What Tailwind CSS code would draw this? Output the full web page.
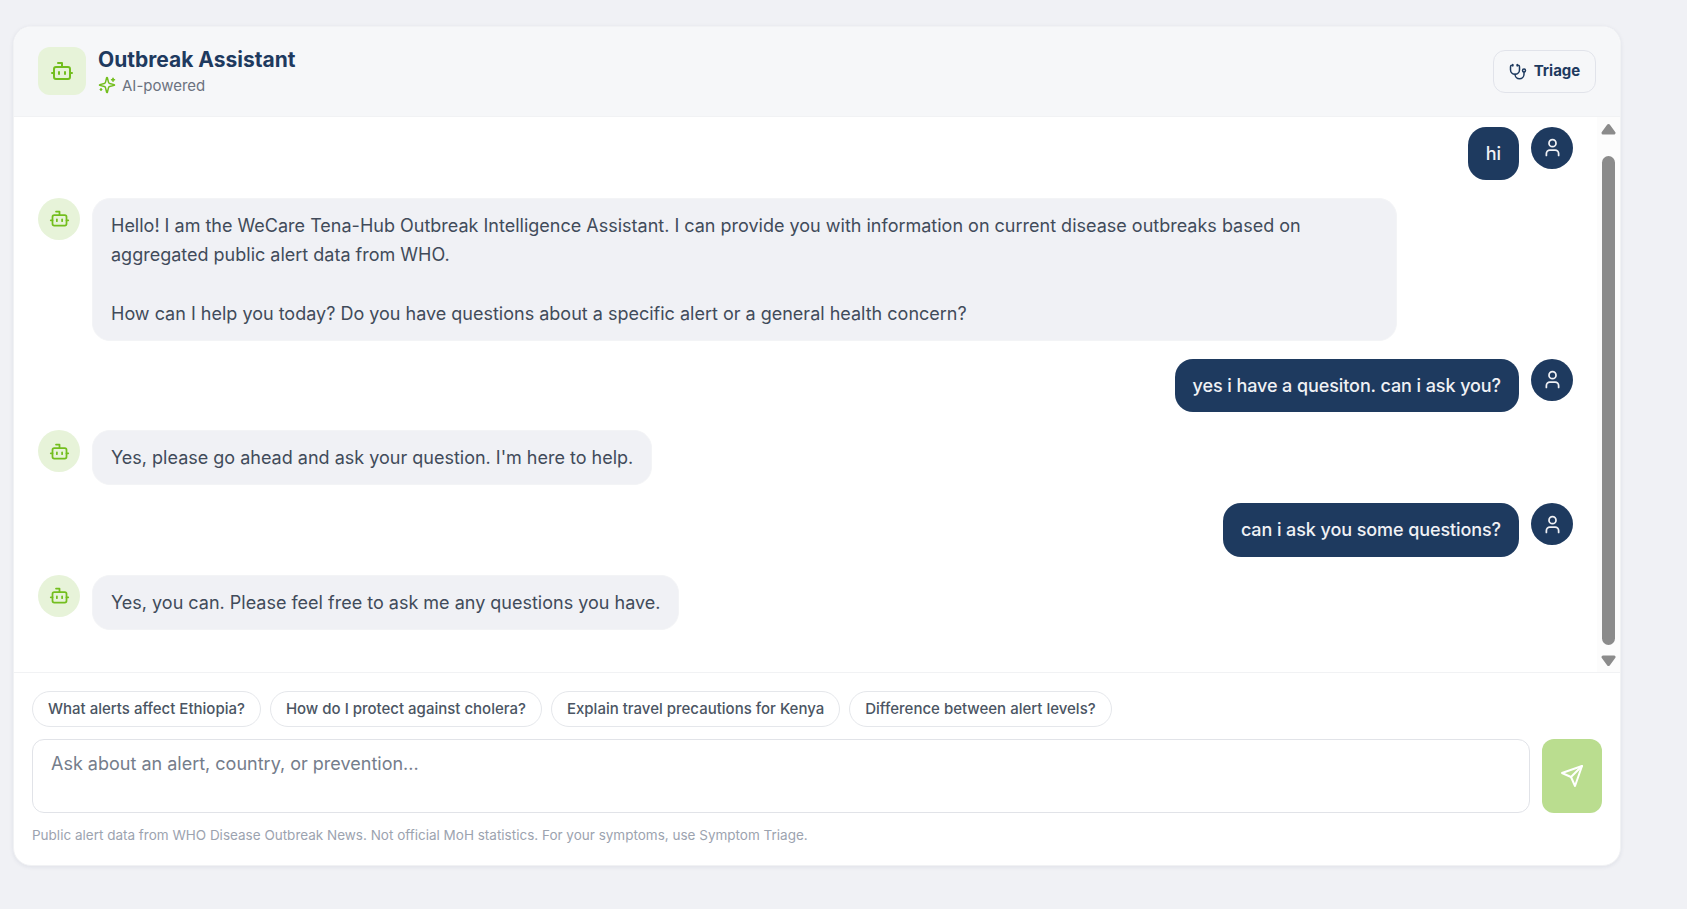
<!doctype html>
<html lang="en">

<head>
    <meta charset="UTF-8" />
    <meta name="viewport" content="width=device-width, initial-scale=1.0" />
    <title>Outbreak Assistant</title>
    <script src="https://cdn.jsdelivr.net/npm/@tailwindcss/browser@4"></script>
</head>

<body class="h-screen overflow-hidden bg-[#f0f1f5] pt-[26px] pl-[13px] font-['Inter',sans-serif] text-[18px] text-[#414b5a]">

    <!-- shared icons -->
    <svg class="hidden">
        <symbol id="bot" viewBox="0 0 24 24">
            <path d="M12 8V4H8" />
            <rect width="16" height="12" x="4" y="8" rx="2" />
            <path d="M2 14h2" />
            <path d="M20 14h2" />
            <path d="M15 13v2" />
            <path d="M9 13v2" />
        </symbol>
        <symbol id="user" viewBox="0 0 24 24">
            <path d="M19 21v-2a4 4 0 0 0-4-4H9a4 4 0 0 0-4 4v2" />
            <circle cx="12" cy="7" r="4" />
        </symbol>
    </svg>

    <div class="flex h-[840px] w-[1608px] flex-col overflow-hidden rounded-[18px] border border-[#f1f2f4] bg-white shadow-[0_1px_4px_rgba(30,40,80,0.08)]">

        <header class="flex h-[90px] shrink-0 items-center justify-between border-b border-[#f1f2f4] bg-[#f6f7f9] px-6">
            <div class="flex items-center gap-3 pb-0.5">
                <div class="flex size-12 items-center justify-center rounded-xl bg-[#e7f3d9] text-[#73be1e]">
                    <svg class="size-6 fill-none stroke-current stroke-2 [stroke-linecap:round] [stroke-linejoin:round]"><use href="#bot" /></svg>
                </div>
                <div class="pt-[3px]">
                    <h1 class="text-[21px] leading-[26px] font-bold text-[#1e3a5f]">Outbreak Assistant</h1>
                    <p class="flex items-center gap-1.5 text-[15px] leading-[25px] text-[#6b7280]">
                        <svg class="size-[18px] fill-none stroke-[#73be1e] stroke-2 [stroke-linecap:round] [stroke-linejoin:round]" viewBox="0 0 24 24">
                            <path d="M9.937 15.5A2 2 0 0 0 8.5 14.063l-6.135-1.582a.5.5 0 0 1 0-.962L8.5 9.936A2 2 0 0 0 9.937 8.5l1.582-6.135a.5.5 0 0 1 .963 0L14.063 8.5A2 2 0 0 0 15.5 9.937l6.135 1.581a.5.5 0 0 1 0 .964L15.5 14.063a2 2 0 0 0-1.437 1.437l-1.582 6.135a.5.5 0 0 1-.963 0z" />
                            <path d="M20 3v4" />
                            <path d="M22 5h-4" />
                            <path d="M4 17v2" />
                            <path d="M5 18H3" />
                        </svg>
                        AI-powered
                    </p>
                </div>
            </div>
            <button class="flex h-[43px] w-[103px] items-center justify-center gap-[7px] rounded-xl border border-[#e1e3ea] text-[15px] font-bold text-[#1e3a5f]">
                <svg class="size-[18px] fill-none stroke-current stroke-2 [stroke-linecap:round] [stroke-linejoin:round]" viewBox="0 0 24 24">
                    <path d="M11 2v2" />
                    <path d="M5 2v2" />
                    <path d="M5 3H4a2 2 0 0 0-2 2v4a6 6 0 0 0 12 0V5a2 2 0 0 0-2-2h-1" />
                    <path d="M8 15a6 6 0 0 0 12 0v-3" />
                    <circle cx="20" cy="10" r="2" />
                </svg>
                Triage
            </button>
        </header>

        <div class="flex h-[555px] shrink-0">
            <div class="flex flex-1 flex-col gap-[18px] px-6 pt-[9.6px] leading-[29.25px]">
                <div class="flex items-start justify-end gap-3">
                    <div class="rounded-[18px] bg-[#1e3a5f] px-[18px] py-3 font-medium tracking-[-0.09px] text-[#f0f1f5]">hi</div>
                    <div class="flex size-[42px] shrink-0 items-center justify-center rounded-full bg-[#1e3a5f] text-[#f0f1f5]">
                        <svg class="size-[21px] fill-none stroke-current stroke-2 [stroke-linecap:round] [stroke-linejoin:round]"><use href="#user" /></svg>
                    </div>
                </div>

                <div class="flex items-start gap-3">
                    <div class="flex size-[42px] shrink-0 items-center justify-center rounded-full bg-[#e7f3d9] text-[#73be1e]">
                        <svg class="size-[21px] fill-none stroke-current stroke-2 [stroke-linecap:round] [stroke-linejoin:round]"><use href="#bot" /></svg>
                    </div>
                    <div class="max-w-[85%] rounded-[18px] border border-[#f3f4f6] bg-[#f0f1f5] px-[18px] py-3 whitespace-pre-line">Hello! I am the WeCare Tena-Hub Outbreak Intelligence Assistant. I can provide you with information on current disease outbreaks based on aggregated public alert data from WHO.

                        How can I help you today? Do you have questions about a specific alert or a general health concern?</div>
                </div>

                <div class="flex items-start justify-end gap-3">
                    <div class="rounded-[18px] bg-[#1e3a5f] px-[18px] py-3 font-medium tracking-[-0.09px] text-[#f0f1f5]">yes i have a quesiton. can i ask you?</div>
                    <div class="flex size-[42px] shrink-0 items-center justify-center rounded-full bg-[#1e3a5f] text-[#f0f1f5]">
                        <svg class="size-[21px] fill-none stroke-current stroke-2 [stroke-linecap:round] [stroke-linejoin:round]"><use href="#user" /></svg>
                    </div>
                </div>

                <div class="flex items-start gap-3">
                    <div class="flex size-[42px] shrink-0 items-center justify-center rounded-full bg-[#e7f3d9] text-[#73be1e]">
                        <svg class="size-[21px] fill-none stroke-current stroke-2 [stroke-linecap:round] [stroke-linejoin:round]"><use href="#bot" /></svg>
                    </div>
                    <div class="rounded-[18px] border border-[#f3f4f6] bg-[#f0f1f5] px-[18px] py-3">Yes, please go ahead and ask your question. I'm here to help.</div>
                </div>

                <div class="flex items-start justify-end gap-3">
                    <div class="rounded-[18px] bg-[#1e3a5f] px-[18px] py-3 font-medium tracking-[-0.09px] text-[#f0f1f5]">can i ask you some questions?</div>
                    <div class="flex size-[42px] shrink-0 items-center justify-center rounded-full bg-[#1e3a5f] text-[#f0f1f5]">
                        <svg class="size-[21px] fill-none stroke-current stroke-2 [stroke-linecap:round] [stroke-linejoin:round]"><use href="#user" /></svg>
                    </div>
                </div>

                <div class="flex items-start gap-3">
                    <div class="flex size-[42px] shrink-0 items-center justify-center rounded-full bg-[#e7f3d9] text-[#73be1e]">
                        <svg class="size-[21px] fill-none stroke-current stroke-2 [stroke-linecap:round] [stroke-linejoin:round]"><use href="#bot" /></svg>
                    </div>
                    <div class="rounded-[18px] border border-[#f3f4f6] bg-[#f0f1f5] px-[18px] py-3">Yes, you can. Please feel free to ask me any questions you have.</div>
                </div>
            </div>

            <!-- scrollbar -->
            <div class="flex w-[23px] flex-col items-center bg-[#fcfcfc] pt-1.5 pb-[5px]">
                <svg class="h-3 w-[15px] shrink-0 fill-[#8b8b8b] stroke-[#8b8b8b] stroke-3 [stroke-linejoin:round]" viewBox="0 0 15 12">
                    <path d="M7.5 2.5L13 10H2z" />
                </svg>
                <div class="mt-[21px] mb-2.5 w-[13px] flex-1 rounded-full bg-[#8b8b8b]"></div>
                <svg class="h-3 w-[15px] shrink-0 fill-[#8b8b8b] stroke-[#8b8b8b] stroke-3 [stroke-linejoin:round]" viewBox="0 0 15 12">
                    <path d="M7.5 9.5L13 2H2z" />
                </svg>
            </div>
        </div>

        <footer class="flex-1 border-t border-[#f1f2f4] px-[18px] pt-[18px]">
            <div class="flex gap-[9px] text-[15px] font-medium text-[#4b5563]">
                <button class="h-9 rounded-full border border-[#e5e7eb] px-[15px]">What alerts affect Ethiopia?</button>
                <button class="h-9 rounded-full border border-[#e5e7eb] px-[15px]">How do I protect against cholera?</button>
                <button class="h-9 rounded-full border border-[#e5e7eb] px-[15px]">Explain travel precautions for Kenya</button>
                <button class="h-9 rounded-full border border-[#e5e7eb] px-[15px]">Difference between alert levels?</button>
            </div>
            <div class="mt-3 flex gap-3">
                <textarea class="h-[74px] flex-1 resize-none rounded-xl border border-[#e1e3e8] px-[18px] py-[10px] leading-[27px] placeholder:text-[#757d8b]" placeholder="Ask about an alert, country, or prevention..."></textarea>
                <button class="flex h-[74px] w-[60px] items-center justify-center rounded-xl bg-[#badd8f] text-white">
                    <svg class="size-6 fill-none stroke-current stroke-2" viewBox="0 0 24 24">
                        <path d="m22 2-7 20-4-9-9-4Z" stroke-linejoin="round" />
                        <path d="M22 2 11 13" stroke-linecap="round" />
                    </svg>
                </button>
            </div>
            <p class="mt-3 text-[13.5px] leading-[21px] text-[#9ca3af]">Public alert data from WHO Disease Outbreak News. Not official MoH statistics. For your symptoms, use Symptom Triage.</p>
        </footer>
    </div>
</body>

</html>
